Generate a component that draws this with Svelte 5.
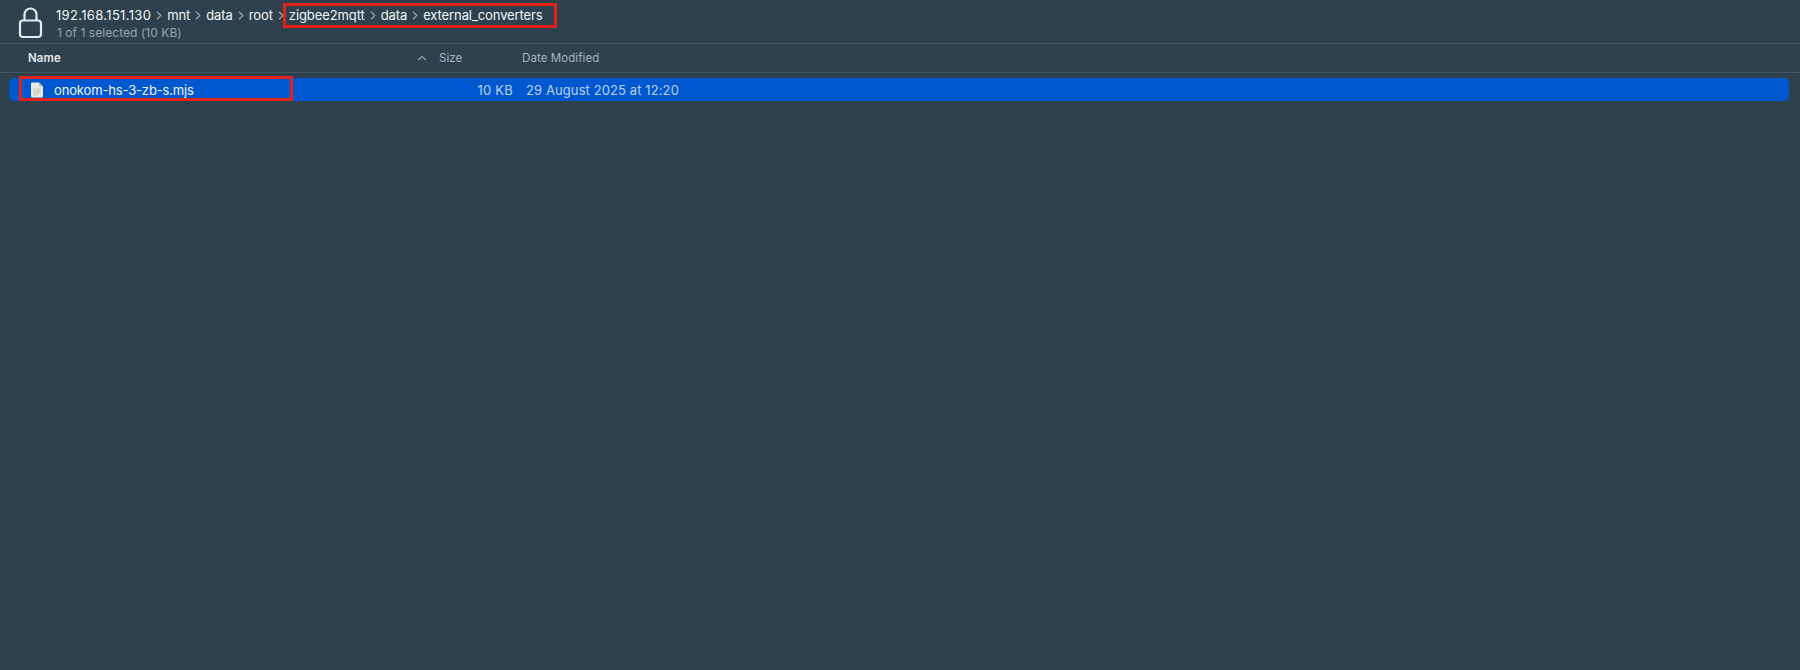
<script>
  const crumbs = ['192.168.151.130', 'mnt', 'data', 'root', 'zigbee2mqtt', 'data', 'external_converters'];
</script>

<div class="window">
  <header class="toolbar">
    <svg class="lock" width="26" height="34" viewBox="0 0 26 34" fill="none" stroke="#e6eaec" stroke-width="2.2">
      <rect x="2" y="14.5" width="21" height="16.5" rx="3" />
      <path d="M6.5 14.5V8.5a6 6 0 0 1 12 0v6" />
    </svg>
    <div class="titles">
      <nav class="crumbs">
        {#each crumbs as crumb, i}
          {#if i > 0}
            <svg class="sep" width="6" height="9" viewBox="0 0 6 9" fill="none" stroke="#9aa5ab" stroke-width="1.2"><path d="M1 .8 4.8 4.5 1 8.2" /></svg>
          {/if}
          <span class={i === 0 ? 'host' : 'part'}>{crumb}</span>
        {/each}
      </nav>
      <div class="status">1 of 1 selected (10 KB)</div>
    </div>
  </header>

  <div class="columns">
    <div class="col name-col"><strong>Name</strong>
      <svg class="sort" width="10" height="6" viewBox="0 0 10 6" fill="none" stroke="#97a3a9" stroke-width="1.3"><path d="M1 5 5 1.5 9 5" /></svg>
    </div>
    <div class="col size-col">Size</div>
    <div class="col date-col">Date Modified</div>
  </div>

  <div class="list">
    <div class="row">
      <div class="cell-name">
        <svg class="file" width="14" height="16" viewBox="0 0 14 16">
          <path d="M1 1.6A1.1 1.1 0 0 1 2.1.5H9L13 4.5V14.4a1.1 1.1 0 0 1-1.1 1.1H2.1A1.1 1.1 0 0 1 1 14.4Z" fill="#eceae4" />
          <path d="M9 .5V4.5H13Z" fill="#bdbbb4" />
          <path d="M3.2 7h7.6M3.2 9h7.6M3.2 11h7.6M3.2 13h5" stroke="#b7b6b0" stroke-width=".8" />
        </svg>
        <span class="file-name">onokom-hs-3-zb-s.mjs</span>
      </div>
      <div class="cell-size">10 KB</div>
      <div class="cell-date">29 August 2025 at 12:20</div>
    </div>
  </div>

  <div class="mark mark-path"></div>
  <div class="mark mark-file"></div>
</div>

<style>
  :global(body) {
    margin: 0;
    background: #2e414d;
  }

  .window {
    position: relative;
    width: 1800px;
    height: 670px;
    overflow: hidden;
    background: #2e414d;
    color: #f2f5f6;
    font-family: Inter, "Liberation Sans", sans-serif;
    font-size: 13px;
  }

  .toolbar {
    box-sizing: border-box;
    height: 44px;
    display: flex;
    gap: 12px;
    padding: 6px 0 0 18px;
    border-bottom: 1px solid #44555f;
  }

  .lock {
    flex: none;
  }

  .titles {
    display: flex;
    flex-direction: column;
    gap: 3px;
    padding-top: 1px;
  }

  .crumbs {
    display: flex;
    align-items: center;
    height: 16px;
    gap: 5px;
    font-size: 13px;
    white-space: nowrap;
  }

  .host {
    letter-spacing: 0.33px;
  }

  .part {
    letter-spacing: -0.1px;
  }

  .status {
    font-size: 12px;
    line-height: 14px;
    color: #96a3aa;
    margin-left: 1px;
    letter-spacing: 0.05px;
  }

  .columns {
    box-sizing: border-box;
    height: 29px;
    display: flex;
    align-items: center;
    padding-left: 28px;
    border-bottom: 1px solid #44555f;
    color: #aab4ba;
    font-size: 11.5px;
    letter-spacing: 0.08px;
  }

  .col strong {
    color: #e6eaec;
    font-weight: 600;
  }

  .name-col {
    width: 401px;
    display: flex;
    align-items: center;
    justify-content: space-between;
    padding-right: 10px;
    box-sizing: content-box;
  }

  .sort {
    margin-right: 2px;
  }

  .size-col {
    width: 83px;
  }

  .list {
    padding: 5px 11px 0 9px;
  }

  .row {
    height: 23px;
    display: flex;
    align-items: center;
    background: #0058d0;
    border-radius: 5px;
    font-size: 13px;
  }

  .cell-name {
    width: 456px;
    display: flex;
    align-items: center;
    gap: 10px;
    padding-left: 21px;
    box-sizing: border-box;
    white-space: nowrap;
  }

  .file-name {
    letter-spacing: -0.15px;
  }

  .cell-size {
    width: 48px;
    text-align: right;
    color: #bcd0ee;
    letter-spacing: 0.2px;
  }

  .cell-date {
    margin-left: 13px;
    color: #bcd0ee;
    letter-spacing: 0.1px;
  }

  .mark {
    position: absolute;
    box-sizing: border-box;
    border: 3px solid #e0241a;
  }

  .mark-path {
    left: 283px;
    top: 3px;
    width: 274px;
    height: 25px;
  }

  .mark-file {
    left: 19px;
    top: 76px;
    width: 274px;
    height: 25px;
  }
</style>
